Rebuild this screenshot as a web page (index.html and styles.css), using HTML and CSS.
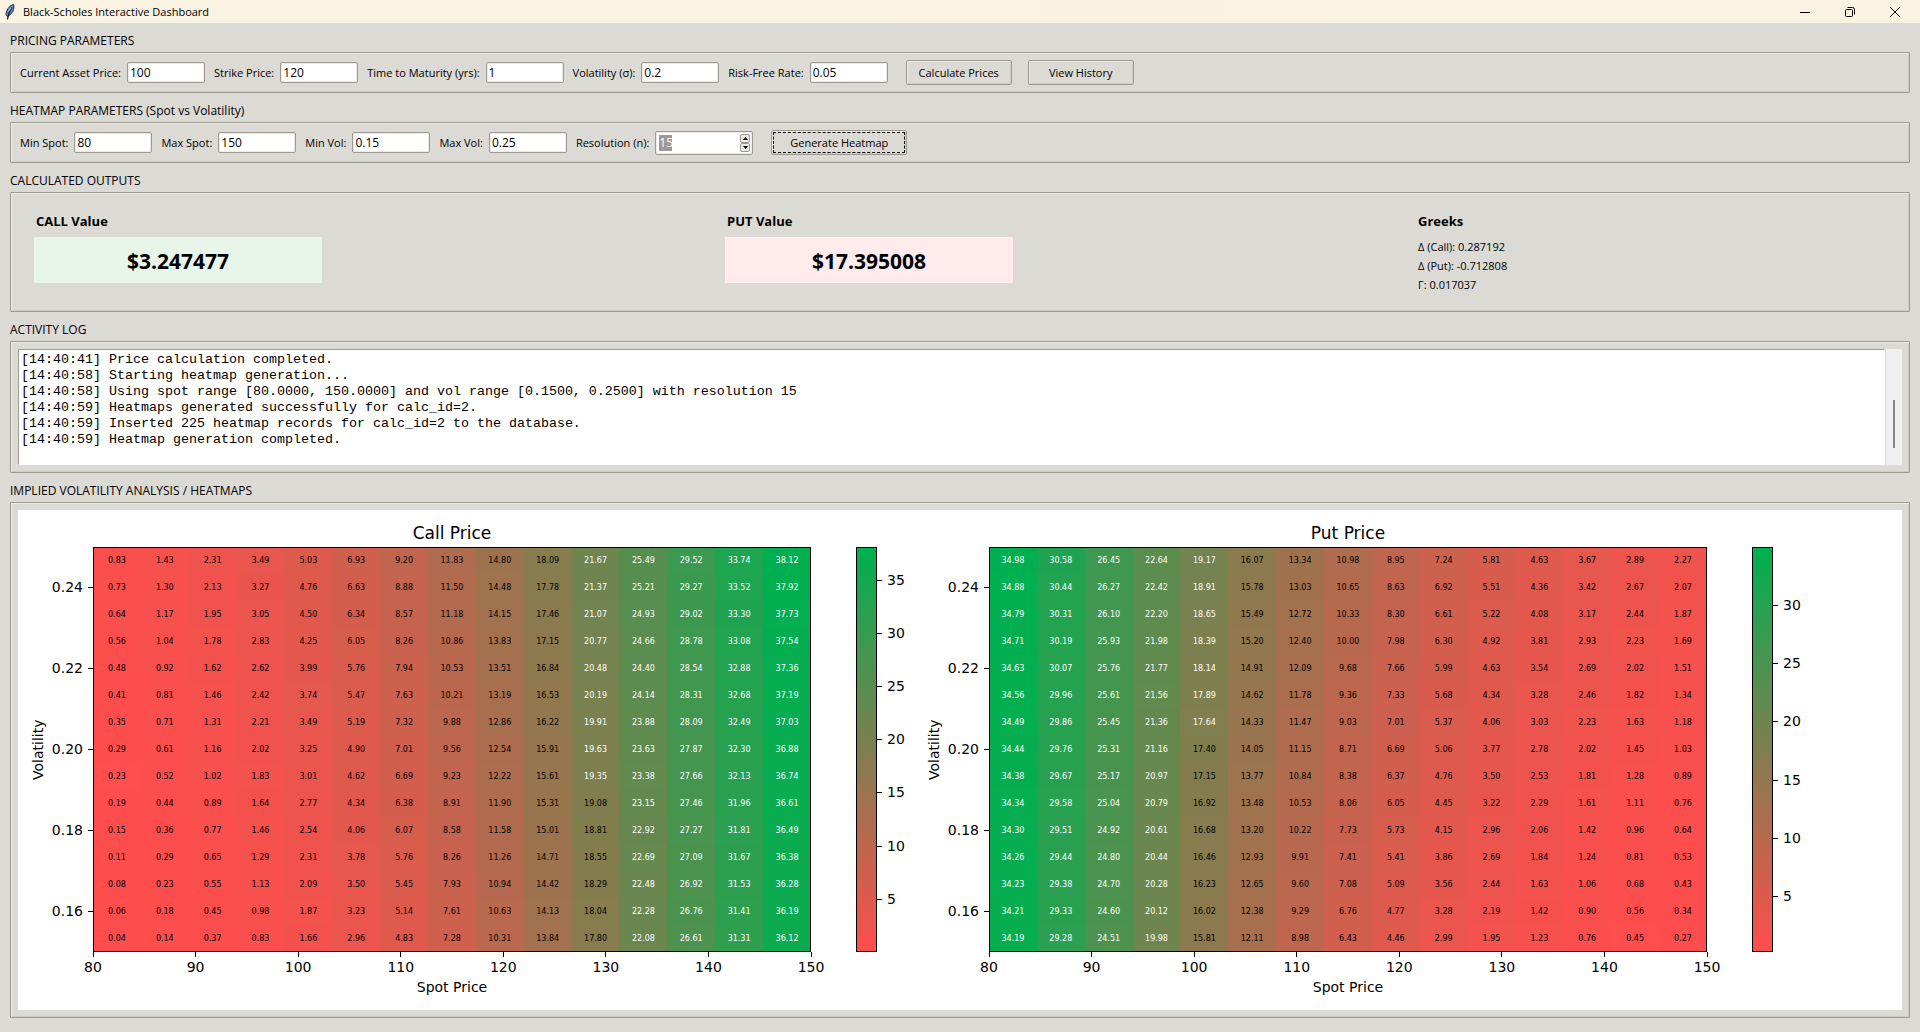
FILE: index.html
```html
<!DOCTYPE html>
<html lang="en">
<head>
<meta charset="utf-8">
<title>Black-Scholes Interactive Dashboard</title>
<link rel="stylesheet" href="styles.css">
</head>
<body>
<header class="titlebar">
  <svg class="app-icon" width="10" height="16" viewBox="0 0 10 16" aria-hidden="true">
    <path d="M8.5.5C5.5 1 2 4.500 1 9.500c0 1.500.500 2.500 1.500 3C5 11.500 8 8 8.500 5.500 8.900 3.500 9.200 1.500 8.500.500z" fill="#5b8fce" stroke="#1c2733" stroke-width="1"/>
    <path d="M7 3C5 6 3 10 2.500 15.500" fill="none" stroke="#10161d" stroke-width="1.200"/>
    <path d="M6 3.500 3.500 7.500" stroke="#c3ddf5" stroke-width="1"/>
  </svg>
  <h1 class="window-title">Black-Scholes Interactive Dashboard</h1>
  <div class="window-controls">
    <button class="window-button" aria-label="Minimize"><svg width="12" height="12" viewBox="0 0 12 12"><path d="M1 6.500h10" stroke="#000"/></svg></button>
    <button class="window-button" aria-label="Restore"><svg width="12" height="12" viewBox="0 0 12 12" fill="none" stroke="#000"><rect x="1.500" y="3.500" width="7" height="7" rx="1"/><path d="M3.500 1.500h5a2 2 0 0 1 2 2v5"/></svg></button>
    <button class="window-button" aria-label="Close"><svg width="12" height="12" viewBox="0 0 12 12"><path d="M1 1l10 10M11 1 1 11" stroke="#000"/></svg></button>
  </div>
</header>

<main class="dashboard">
  <section>
    <h2 class="section-title">PRICING PARAMETERS</h2>
    <form class="frame toolbar">
      <div class="field"><label for="spot">Current Asset Price:</label><input class="entry" id="spot" value="100"></div>
      <div class="field"><label for="strike">Strike Price:</label><input class="entry" id="strike" value="120"></div>
      <div class="field"><label for="maturity">Time to Maturity (yrs):</label><input class="entry" id="maturity" value="1"></div>
      <div class="field"><label for="sigma">Volatility (σ):</label><input class="entry" id="sigma" value="0.2"></div>
      <div class="field"><label for="rate">Risk-Free Rate:</label><input class="entry" id="rate" value="0.05"></div>
      <div class="actions">
        <button class="button" type="button">Calculate Prices</button>
        <button class="button" type="button">View History</button>
      </div>
    </form>
  </section>

  <section>
    <h2 class="section-title">HEATMAP PARAMETERS (Spot vs Volatility)</h2>
    <form class="frame toolbar">
      <div class="field"><label for="min-spot">Min Spot:</label><input class="entry" id="min-spot" value="80"></div>
      <div class="field"><label for="max-spot">Max Spot:</label><input class="entry" id="max-spot" value="150"></div>
      <div class="field"><label for="min-vol">Min Vol:</label><input class="entry" id="min-vol" value="0.15"></div>
      <div class="field"><label for="max-vol">Max Vol:</label><input class="entry" id="max-vol" value="0.25"></div>
      <div class="field"><label for="resolution">Resolution (n):</label>
        <div class="spinbox">
          <input class="spin-entry" id="resolution" value="15">
          <div class="spin-arrows">
            <button class="spin-button" type="button" aria-label="Increase"><svg width="5" height="3" viewBox="0 0 5 3"><path d="M0 3 2.500 0 5 3z"/></svg></button>
            <button class="spin-button" type="button" aria-label="Decrease"><svg width="5" height="3" viewBox="0 0 5 3"><path d="M0 0 2.500 3 5 0z"/></svg></button>
          </div>
        </div>
      </div>
      <div class="actions">
        <button class="button button-focused" type="button">Generate Heatmap</button>
      </div>
    </form>
  </section>

  <section>
    <h2 class="section-title">CALCULATED OUTPUTS</h2>
    <div class="frame outputs">
      <div>
        <h3 class="output-title">CALL Value</h3>
        <output class="price price-call">$3.247477</output>
      </div>
      <div>
        <h3 class="output-title">PUT Value</h3>
        <output class="price price-put">$17.395008</output>
      </div>
      <div>
        <h3 class="output-title">Greeks</h3>
        <ul class="greeks">
          <li>Δ (Call): 0.287192</li>
          <li>Δ (Put): -0.712808</li>
          <li>Γ: 0.017037</li>
        </ul>
      </div>
    </div>
  </section>

  <section>
    <h2 class="section-title" id="log-title">ACTIVITY LOG</h2>
    <div class="frame log">
      <textarea class="log-text" rows="7" readonly aria-labelledby="log-title">[14:40:41] Price calculation completed.
[14:40:58] Starting heatmap generation...
[14:40:58] Using spot range [80.0000, 150.0000] and vol range [0.1500, 0.2500] with resolution 15
[14:40:59] Heatmaps generated successfully for calc_id=2.
[14:40:59] Inserted 225 heatmap records for calc_id=2 to the database.
[14:40:59] Heatmap generation completed.</textarea>
      <div class="scrollbar"><div class="scroll-thumb"></div></div>
    </div>
  </section>

  <section>
    <h2 class="section-title">IMPLIED VOLATILITY ANALYSIS / HEATMAPS</h2>
    <div class="frame figure">
      <div class="canvas">
        <div class="chart" data-kind="call" data-title="Call Price"></div>
        <div class="chart" data-kind="put" data-title="Put Price"></div>
      </div>
    </div>
  </section>
</main>
<script src="heatmap.js"></script>
</body>
</html>
```
FILE: styles.css
```css
* {
  box-sizing: border-box;
}

body {
  margin: 0;
  background: #dcdad5;
  color: #000;
  font: 11px/16px "Open Sans", "Noto Sans", sans-serif;
}

input,
button,
textarea {
  margin: 0;
  color: inherit;
  font: inherit;
}

/* Title bar */
.titlebar {
  display: flex;
  align-items: center;
  height: 23px;
  padding-left: 5px;
  background: linear-gradient(90deg, #f9f3e1, #faf1e2 60%, #f9f3e1);
}

.window-title {
  flex: 1;
  margin: 0 0 0 8px;
  font-size: 11px;
  font-weight: 400;
}

.window-controls {
  display: flex;
  padding-right: 3px;
}

.window-button {
  display: flex;
  align-items: center;
  justify-content: center;
  width: 45px;
  height: 20px;
  padding: 0;
  border: 0;
  background: none;
}

/* Framed sections */
.dashboard {
  padding: 0 10px 14px;
}

.section-title {
  margin: 0;
  padding: 10px 0 3px;
  font-size: 12px;
  font-weight: 400;
  line-height: 16px;
}

.frame {
  border: 1px solid #9e9a91;
  border-radius: 1px;
  box-shadow: inset 1px 1px #eeebe7, inset -1px -1px #cfcdc8;
}

.toolbar {
  display: flex;
  align-items: center;
  gap: 9px;
  height: 41px;
  padding: 0 9px;
}

.field {
  display: flex;
  align-items: center;
  gap: 6px;
  white-space: nowrap;
}

.entry {
  width: 78px;
  height: 21px;
  padding: 0 2px;
  border: 1px solid #9e9a91;
  border-radius: 2px;
  background: #fff;
  box-shadow: inset 0 0 0 1px #eeebe7;
  font-size: 12px;
}

.spinbox {
  display: flex;
  width: 98px;
  height: 24px;
  padding: 2px;
  border: 1px solid #9e9a91;
  border-radius: 2px;
  background: #fff;
  box-shadow: inset 0 0 0 1px #eeebe7;
}

.spin-entry {
  flex: 1;
  min-width: 0;
  padding: 0 1px;
  border: 0;
  background: linear-gradient(#9e9a91, #9e9a91) 1px center / 13px 16px no-repeat;
  color: #fff;
  font-size: 12px;
}

.spin-arrows {
  display: flex;
  flex-direction: column;
  width: 10px;
}

.spin-button {
  display: flex;
  flex: 1;
  align-items: center;
  justify-content: center;
  padding: 0;
  border: 1px solid #9e9a91;
  border-radius: 2px;
  background: #eeebe7;
}

.actions {
  display: flex;
  gap: 16px;
  padding-left: 9px;
}

.button {
  min-width: 106px;
  height: 25px;
  padding: 0 10px;
  border: 1px solid #9e9a91;
  border-radius: 2px;
  background: #dcdad5;
  box-shadow: inset 1px 1px #eeebe7, inset -1px -1px #cfcdc8;
}

.button-focused {
  min-width: 136px;
  outline: 1px dashed #000;
  outline-offset: -3px;
}

/* Calculated outputs */
.outputs {
  display: grid;
  grid-template-columns: 691fr 691fr 486fr;
  min-height: 120px;
  padding: 20px 7px 16px 23px;
}

.output-title {
  margin: 0;
  padding-left: 2px;
  font-size: 13px;
  font-weight: 700;
  line-height: 16px;
}

.price {
  display: block;
  width: 288px;
  margin-top: 8px;
  padding-top: 2px;
  font-size: 21px;
  font-weight: 700;
  line-height: 44px;
  text-align: center;
}

.price-call {
  background: #e8f5e9;
}

.price-put {
  background: #ffebeb;
}

.greeks {
  margin: 8px 0 0;
  padding: 0 0 0 2px;
  list-style: none;
  line-height: 19px;
}

/* Activity log */
.log {
  display: flex;
  gap: 1px;
  padding: 7px;
}

.log-text {
  flex: 1;
  height: 116px;
  padding: 2px;
  border: 1px solid #fff;
  border-top-color: #9e9a91;
  border-left-color: #9e9a91;
  background: #fff;
  font-family: "Liberation Mono", monospace;
  font-size: 10pt;
  line-height: 16px;
  outline: none;
  overflow: hidden;
  resize: none;
  white-space: pre;
}

.scrollbar {
  display: flex;
  flex-direction: column;
  align-items: center;
  width: 16px;
  padding-top: 51px;
  background: #f0f0f0;
}

.scroll-thumb {
  width: 2px;
  height: 48px;
  background: #858585;
}

/* Heatmap figure */
.figure {
  padding: 7px;
}

.canvas {
  display: flex;
  padding-right: 92px;
  background: #fff;
  font: 14px/17px "DejaVu Sans", sans-serif;
}

.chart {
  display: grid;
  flex: 1;
  grid-template-columns: 75px 1fr 45px 21px 37px;
  grid-template-rows: 37px auto 58px;
}

.chart-title {
  grid-column: 2;
  margin: 0;
  padding-top: 12px;
  font-size: 17px;
  font-weight: 400;
  line-height: 22px;
  text-align: center;
}

.y-axis {
  display: flex;
  grid-row: 2;
  grid-column: 1;
}

.y-label {
  padding-right: 12px;
  text-align: center;
  writing-mode: vertical-rl;
  transform: rotate(180deg);
}

.y-ticks {
  display: flex;
  flex: 1;
  flex-direction: column;
}

.y-tick {
  display: flex;
  flex: 1;
  align-items: center;
  justify-content: flex-end;
  gap: 5px;
}

.y-tick::after,
.bar-tick::before {
  width: 5px;
  height: 1px;
  background: #000;
  content: "";
}

.heatmap {
  grid-row: 2;
  grid-column: 2;
  width: 100%;
  border-spacing: 0;
  outline: 1px solid #000;
  outline-offset: -1px;
  table-layout: fixed;
}

.cell {
  height: 27px;
  padding: 0;
  font-size: 8px;
  line-height: 10px;
  text-align: center;
}

.cell-light {
  color: #fff;
}

.x-axis {
  grid-row: 3;
  grid-column: 2;
  text-align: center;
}

.x-ticks {
  display: flex;
  margin: 0 calc(-100% / 14);
}

.x-tick {
  display: flex;
  flex: 1;
  flex-direction: column;
  align-items: center;
  gap: 2px;
}

.x-tick::before {
  width: 1px;
  height: 5px;
  background: #000;
  content: "";
}

.x-label {
  padding-top: 3px;
}

.colorbar {
  grid-row: 2;
  grid-column: 4;
  border: 1px solid #000;
  background: linear-gradient(#00b050, #ff4d4d);
}

.bar-axis {
  display: flex;
  grid-row: 2;
  grid-column: 5;
  flex-direction: column;
}

.bar-tick {
  display: flex;
  align-items: center;
  gap: 5px;
  flex-basis: 0;
}

.bar-space {
  flex-basis: 0;
}
```
FILE: heatmap.js
```js
const STRIKE = 120, RATE = 0.05, MATURITY = 1, STEPS = 15;
const LOW = [255, 77, 77], HIGH = [0, 176, 80];

// Cumulative normal distribution by its power series.
function normCdf(x) {
  let term = x, sum = x;
  for (let k = 1; k < 200; k++) {
    term *= x * x / (2 * k + 1);
    sum += term;
  }
  return 0.5 + sum * Math.exp(-x * x / 2) / Math.sqrt(2 * Math.PI);
}

function price(kind, spot, vol) {
  const spread = vol * Math.sqrt(MATURITY);
  const d1 = (Math.log(spot / STRIKE) + (RATE + vol * vol / 2) * MATURITY) / spread;
  const discounted = STRIKE * Math.exp(-RATE * MATURITY);
  const call = spot * normCdf(d1) - discounted * normCdf(d1 - spread);
  return kind === "call" ? call : call - spot + discounted;
}

function drawChart(chart) {
  const rows = [];
  for (let r = STEPS - 1; r >= 0; r--) {
    const row = [];
    for (let c = 0; c < STEPS; c++) {
      row.push(price(chart.dataset.kind, 80 + 70 * c / (STEPS - 1), 0.15 + 0.1 * r / (STEPS - 1)));
    }
    rows.push(row);
  }
  const min = Math.min(...rows.flat()), max = Math.max(...rows.flat());

  const body = rows.map(row => "<tr>" + row.map(value => {
    const t = (value - min) / (max - min);
    const rgb = LOW.map((low, i) => Math.round(low + (HIGH[i] - low) * t));
    return `<td class="cell${t > 0.5002 ? " cell-light" : ""}" style="background:rgb(${rgb})">${value.toFixed(2)}</td>`;
  }).join("") + "</tr>").join("");

  const yTicks = ["0.24", "0.22", "0.20", "0.18", "0.16"].map(t => `<div class="y-tick">${t}</div>`).join("");
  const xTicks = [80, 90, 100, 110, 120, 130, 140, 150].map(t => `<div class="x-tick">${t}</div>`).join("");

  // Each tick of the colour bar sits in the middle of a band five units high.
  const top = Math.floor((max - 2.5) / 5) * 5;
  let barTicks = `<div class="bar-space" style="flex-grow:${max - top - 2.5}"></div>`;
  for (let t = top; t > 0; t -= 5) {
    barTicks += `<div class="bar-tick" style="flex-grow:5">${t}</div>`;
  }
  barTicks += `<div class="bar-space" style="flex-grow:${2.5 - min}"></div>`;

  chart.innerHTML = `<h3 class="chart-title">${chart.dataset.title}</h3>
    <div class="y-axis"><div class="y-label">Volatility</div><div class="y-ticks">${yTicks}</div></div>
    <table class="heatmap" aria-label="${chart.dataset.title}"><tbody>${body}</tbody></table>
    <div class="x-axis"><div class="x-ticks">${xTicks}</div><div class="x-label">Spot Price</div></div>
    <div class="colorbar"></div>
    <div class="bar-axis">${barTicks}</div>`;
}

document.querySelectorAll(".chart").forEach(drawChart);
```
